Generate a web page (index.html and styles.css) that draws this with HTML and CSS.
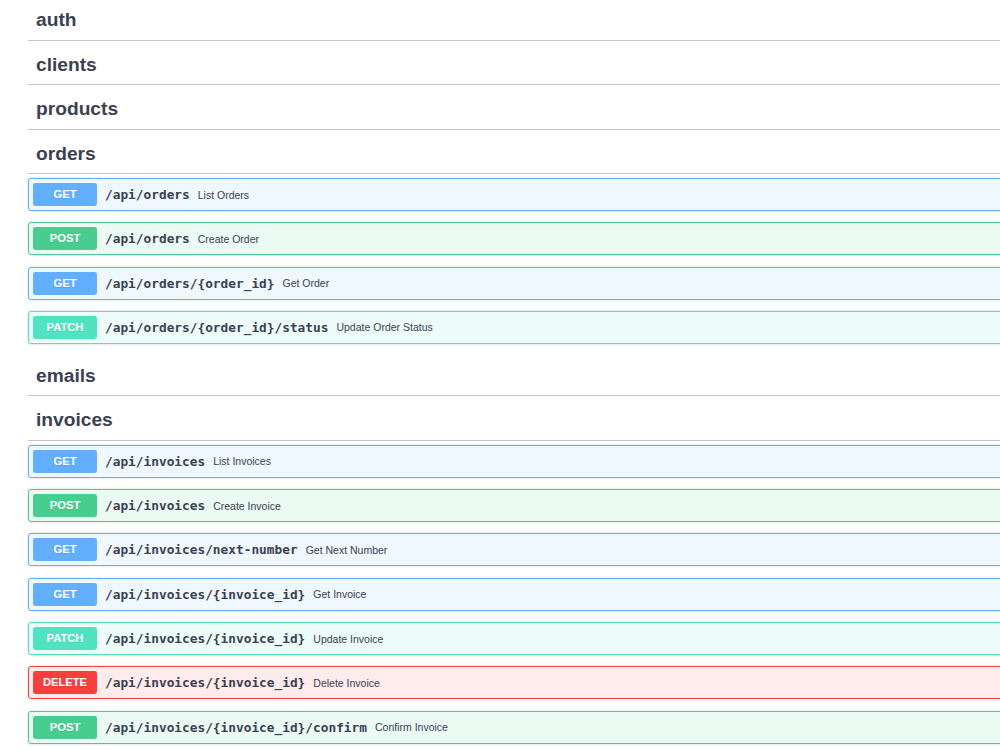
FILE: index.html
```html
<!DOCTYPE html>
<html lang="en">
<head>
    <meta charset="UTF-8">
    <title>API Docs</title>
    <link rel="stylesheet" href="styles.css">
</head>
<body>
    <div class="wrapper">
        <section class="tag-section">
            <h3 class="tag">auth</h3>
        </section>
        <section class="tag-section">
            <h3 class="tag">clients</h3>
        </section>
        <section class="tag-section">
            <h3 class="tag">products</h3>
        </section>
        <section class="tag-section">
            <h3 class="tag">orders</h3>
            <div class="ops">
                <div class="opblock get"><div class="summary"><span class="method">GET</span><span class="path">/api/orders</span><span class="desc">List Orders</span></div></div>
                <div class="opblock post"><div class="summary"><span class="method">POST</span><span class="path">/api/orders</span><span class="desc">Create Order</span></div></div>
                <div class="opblock get"><div class="summary"><span class="method">GET</span><span class="path">/api/orders/{order_id}</span><span class="desc">Get Order</span></div></div>
                <div class="opblock patch"><div class="summary"><span class="method">PATCH</span><span class="path">/api/orders/{order_id}/status</span><span class="desc">Update Order Status</span></div></div>
            </div>
        </section>
        <section class="tag-section">
            <h3 class="tag">emails</h3>
        </section>
        <section class="tag-section">
            <h3 class="tag">invoices</h3>
            <div class="ops">
                <div class="opblock get"><div class="summary"><span class="method">GET</span><span class="path">/api/invoices</span><span class="desc">List Invoices</span></div></div>
                <div class="opblock post"><div class="summary"><span class="method">POST</span><span class="path">/api/invoices</span><span class="desc">Create Invoice</span></div></div>
                <div class="opblock get"><div class="summary"><span class="method">GET</span><span class="path">/api/invoices/next-number</span><span class="desc">Get Next Number</span></div></div>
                <div class="opblock get"><div class="summary"><span class="method">GET</span><span class="path">/api/invoices/{invoice_id}</span><span class="desc">Get Invoice</span></div></div>
                <div class="opblock patch"><div class="summary"><span class="method">PATCH</span><span class="path">/api/invoices/{invoice_id}</span><span class="desc">Update Invoice</span></div></div>
                <div class="opblock delete"><div class="summary"><span class="method">DELETE</span><span class="path">/api/invoices/{invoice_id}</span><span class="desc">Delete Invoice</span></div></div>
                <div class="opblock post"><div class="summary"><span class="method">POST</span><span class="path">/api/invoices/{invoice_id}/confirm</span><span class="desc">Confirm Invoice</span></div></div>
            </div>
        </section>
    </div>
</body>
</html>
```

FILE: styles.css
```css
html, body {
    margin: 0;
    overflow: hidden;
    background: #fff;
}
body {
    font-family: "Liberation Sans", Arial, sans-serif;
    color: #3b4151;
}
.wrapper {
    width: 1200px;
    padding: 0 0 0 28px;
}
.tag-section {
    display: flex;
    flex-direction: column;
}
.tag {
    margin: 0 0 4px;
    padding: 8px 16px 8px 8px;
    font-size: 19.2px;
    line-height: 23.5px;
    font-weight: 700;
    color: #3b4151;
    border-bottom: 1px solid rgba(59, 65, 81, 0.3);
}
.ops {
    padding-bottom: 0.5px;
}
.opblock {
    margin: 0 0 11.33px;
    border: 1px solid #000;
    border-radius: 3px;
    box-shadow: 0 0 2.4px rgba(0, 0, 0, 0.19);
}
.summary {
    display: flex;
    align-items: center;
    height: 23px;
    padding: 4px;
}
.method {
    display: inline-block;
    min-width: 64px;
    padding: 5px 0;
    font-size: 11.2px;
    line-height: 13px;
    font-weight: 700;
    text-align: center;
    color: #fff;
    border-radius: 2.4px;
    text-shadow: 0 1px 0 rgba(0, 0, 0, 0.1);
}
.path {
    padding: 0 8px;
    font-family: "DejaVu Sans Mono", monospace;
    font-size: 12.8px;
    font-weight: 700;
    color: #3b4151;
}
.desc {
    font-size: 10.5px;
    color: #3b4151;
}
.get {
    background: rgba(97, 175, 254, 0.1);
    border-color: #61affe;
}
.get .method {
    background: #61affe;
}
.post {
    background: rgba(73, 204, 144, 0.1);
    border-color: #49cc90;
}
.post .method {
    background: #49cc90;
}
.patch {
    background: rgba(80, 227, 194, 0.1);
    border-color: #50e3c2;
}
.patch .method {
    background: #50e3c2;
}
.delete {
    background: rgba(249, 62, 62, 0.1);
    border-color: #f93e3e;
}
.delete .method {
    background: #f93e3e;
}
```
